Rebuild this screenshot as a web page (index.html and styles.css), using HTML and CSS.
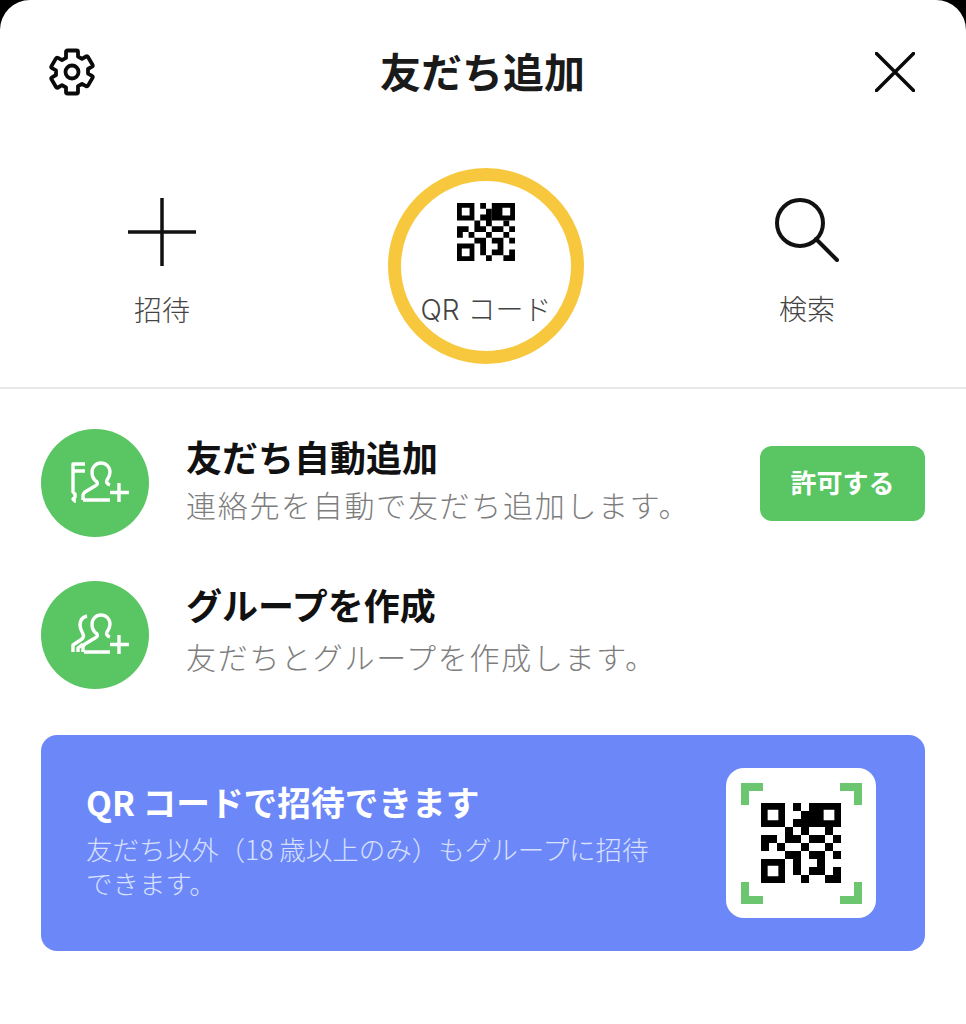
FILE: index.html
```html
<!DOCTYPE html>
<html lang="ja">
<head>
<meta charset="utf-8">
<title>友だち追加</title>
<link rel="stylesheet" href="styles.css">
</head>
<body>
<main class="sheet">
  <header class="head">
    <svg class="gear" viewBox="0 0 48 48"><path d="M19.500 2.500h9a1.500 1.500 0 0 1 1.500 1.500v4.500l4 2.300 4-2.300a1.500 1.500 0 0 1 2 .5l4.500 7.700a1.500 1.500 0 0 1-.5 2l-4 2.300v4.600l4 2.300a1.500 1.500 0 0 1 .5 2l-4.500 7.700a1.500 1.500 0 0 1-2 .5l-4-2.300-4 2.300V44a1.500 1.500 0 0 1-1.500 1.500h-9a1.500 1.500 0 0 1-1.500-1.500v-4.500l-4-2.300-4 2.300a1.500 1.500 0 0 1-2-.5l-4.500-7.700a1.500 1.500 0 0 1 .5-2l4-2.300v-4.600l-4-2.300a1.500 1.500 0 0 1-.5-2l4.500-7.700a1.500 1.500 0 0 1 2-.5l4 2.300 4-2.300V4a1.500 1.500 0 0 1 1.500-1.500z"/><circle cx="24" cy="24" r="6.500"/></svg>
    <h1 class="title">友だち追加</h1>
    <svg class="close" viewBox="0 0 40 40"><path d="M1.500 1.500l37 37M38.500 1.500l-37 37"/></svg>
  </header>
  <nav class="tabs">
    <div class="tab">
      <svg class="tab-icon" viewBox="0 0 68 68"><path d="M0 34h68M34 0v68"/></svg>
      <span>招待</span>
    </div>
    <div class="tab tab-qr">
      <svg class="tab-qr-icon" viewBox="0 0 10 10"><use href="#qr"/></svg>
      <span>QR コード</span>
    </div>
    <div class="tab">
      <svg class="tab-search" viewBox="0 0 64 64"><circle cx="25" cy="25" r="23"/><path d="M41 41l21 21"/></svg>
      <span>検索</span>
    </div>
  </nav>
  <section class="list">
    <div class="row">
      <div class="avatar">
        <svg viewBox="0 0 60 42"><path d="M15 3H3v28l2 2v3l-2 2 2 2h1M3 10h12M13 39v-5c0-1 1-2 2-3l10-6c2-1 3-2 2-4-3-2-5-6-5-10 0-5 4-9 9-9s9 4 9 9c0 4-2 6-3 8-1 2 0 4 3 5M13 39h27M49 22v19M40 31.500h19"/></svg>
      </div>
      <div class="copy">
        <h2>友だち自動追加</h2>
        <p>連絡先を自動で友だち追加します。</p>
      </div>
      <button class="allow">許可する</button>
    </div>
    <div class="row">
      <div class="avatar">
        <svg viewBox="0 0 60 42"><path d="M17 3c-4 1-7 4-7 9 0 4 2 7 3 9 1 2 1 3-1 5l-9 6v7M8 39v-4l5-4M13 39v-5c0-1 1-2 2-3l10-6c2-1 3-2 2-4-3-2-5-6-5-10 0-5 4-9 9-9s9 4 9 9c0 4-2 6-3 8-1 2 0 4 3 5M14 39h26M49 22v19M40 31.500h19"/></svg>
      </div>
      <div class="copy copy-wide">
        <h2>グループを作成</h2>
        <p>友だちとグループを作成します。</p>
      </div>
    </div>
  </section>
  <section class="banner">
    <div class="banner-copy">
      <h2>QR コードで招待できます</h2>
      <p>友だち以外（18 歳以上のみ）もグループに招待できます。</p>
    </div>
    <div class="qr-card">
      <svg class="corners" viewBox="0 0 121 121"><path d="M22 4H4v18M99 4h18v18M4 99v18h18M117 99v18H99"/></svg>
      <svg class="qr-big" viewBox="0 0 10 10"><use href="#qr"/></svg>
    </div>
  </section>
</main>
<svg class="defs" width="0" height="0"><defs><g id="qr"><path fill-rule="evenodd" d="M0 0h3v3H0zM.83 .83v1.340h1.340V.83zM6 0h4v3H6zM7.830 .83v1.340h1.340V.83zM0 7h3v3H0zM.83 7.830v1.340h1.340V7.830z"/><path d="M4 0h1v1H4zM5 1h1v3H5zM4 2h1v1H4zM8 3h1v1H8zM3 3h1v1H3zM0 4h2v1H0zM3 4h2v1H3zM6 4h2v1H6zM9 4h1v1H9zM0 5h1v1H0zM2 5h1v1H2zM5 5h1v1H5zM8 5h1v1H8zM3 6h2v1H3zM6 6h2v1H6zM9 6h1v1H9zM4 7h1v2H4zM7 7h1v2H7zM6 8h1v1H6zM9 8h1v1H9zM5 9h1v1H5zM8 9h2v1H8z"/></g></defs></svg>
</body>
</html>
```
FILE: styles.css
```css
* { box-sizing: border-box; }
html, body { margin: 0; padding: 0; }
body { width: 966px; height: 1024px; overflow: hidden; background: #000; font-family: "Noto Sans CJK JP", "Inter", sans-serif; }
h1, h2, p { margin: 0; }
.sheet { width: 966px; height: 1024px; background: #fff; border-radius: 30px 30px 0 0; display: flex; flex-direction: column; }
.head { height: 146px; padding: 47px 48px 0 48px; display: flex; justify-content: space-between; align-items: flex-start; }
.gear { width: 48px; height: 50px; fill: none; stroke: #0a0a0a; stroke-width: 3.800; stroke-linejoin: round; }
.title { font-size: 41px; font-weight: 700; line-height: 50px; color: #1a1a1a; margin-left: -6px; margin-top: -2px; }
.close { width: 40px; height: 40px; margin: 5px 3px 0 0; fill: none; stroke: #0a0a0a; stroke-width: 3.500; stroke-linecap: round; }
.tabs { height: 243px; border-bottom: 2px solid #e9e9e9; display: grid; grid-template-columns: 324px 324px 318px; }
.tab { display: flex; flex-direction: column; align-items: center; color: #444; font-size: 28px; font-weight: 300; line-height: 36px; padding-top: 52px; }
.tab-icon { width: 68px; height: 68px; fill: none; stroke: #111; stroke-width: 3.500; margin-bottom: 25px; }
.tab-search { width: 64px; height: 64px; fill: none; stroke: #111; stroke-width: 4; stroke-linecap: round; margin-bottom: 28px; }
.tab-qr { width: 196px; height: 196px; border: 13px solid #f7c83e; border-radius: 50%; justify-self: center; margin-top: 22px; padding-top: 22px; }
.tab-qr span { font-family: "Inter", "Noto Sans CJK JP", sans-serif; margin-top: 31px; white-space: nowrap; }
.tab-qr-icon { width: 58px; height: 58px; flex: none; }
.list { padding: 40px 41px 0; display: flex; flex-direction: column; gap: 44px; }
.row { display: flex; align-items: center; height: 108px; }
.avatar { width: 108px; height: 108px; border-radius: 50%; background: #5ac563; display: flex; align-items: center; justify-content: center; flex: none; }
.avatar svg { width: 60px; height: 42px; fill: none; stroke: #fff; stroke-width: 3.400; stroke-linejoin: round; margin: 0 0 2px 10px; }
.copy { margin-left: 37px; flex: 1; padding-bottom: 8px; }
.copy h2 { font-size: 36px; line-height: 44px; font-weight: 700; color: #111; }
.copy p { font-size: 30px; font-weight: 300; letter-spacing: 1.700px; line-height: 40px; color: #7d7d7d; margin-top: 6px; }
.copy-wide { padding-bottom: 12px; }
.copy-wide p { margin-top: 10px; }
.allow { width: 165px; height: 75px; border: 0; border-radius: 12px; background: #5ac563; color: #fff; font: 700 26px "Noto Sans CJK JP", sans-serif; padding: 0 0 3px; }
.banner { margin: 46px 41px 0; height: 216px; border-radius: 16px; background: #6c88f8; display: flex; padding: 33px 49px 0 45px; justify-content: space-between; }
.banner-copy { width: 570px; padding-top: 14px; }
.banner-copy h2 { font-size: 33.700px; line-height: 40px; font-weight: 700; color: #fff; }
.banner-copy p { font-size: 26.500px; font-weight: 300; line-height: 34px; color: #d8e0fe; margin-top: 10px; }
.qr-card { width: 150px; height: 150px; border-radius: 18px; background: #fff; position: relative; display: flex; align-items: center; justify-content: center; }
.corners { position: absolute; left: 15px; top: 15px; width: 121px; height: 121px; fill: none; stroke: #6cc56f; stroke-width: 8; }
.qr-big { width: 80px; height: 80px; }
.defs { position: absolute; }
```
